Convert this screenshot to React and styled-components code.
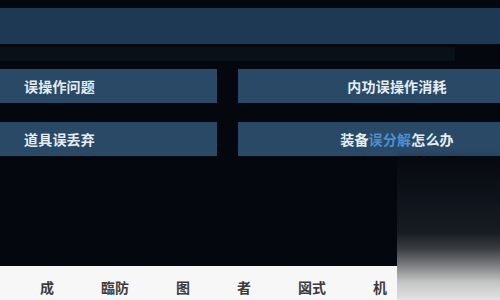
import React from "react";
import styled, { createGlobalStyle } from "styled-components";

const Global = createGlobalStyle`
  html, body { margin: 0; padding: 0; }
  body { width: 500px; height: 300px; overflow: hidden; background: #04070d; }
`;

const Page = styled.div`
  position: relative;
  width: 500px;
  height: 300px;
  overflow: hidden;
  background: #04070d;
  font-family: "Noto Sans CJK SC", "Noto Sans", sans-serif;
  display: flex;
  flex-direction: column;
`;

const TopBar = styled.div`
  margin-top: 8px;
  height: 36px;
  background: #1d3953;
`;

const Band = styled.div`
  margin-top: 3px;
  height: 14px;
  width: 455px;
  background: #0a1017;
`;

const Grid = styled.div`
  margin-top: 8px;
  display: grid;
  grid-template-columns: 217px 318px;
  column-gap: 21px;
  row-gap: 19px;
`;

const Cell = styled.div`
  height: 34px;
  background: #294966;
  display: flex;
  align-items: center;
  justify-content: ${(p) => (p.$center ? "center" : "flex-start")};
  padding-left: ${(p) => (p.$center ? "0" : "24px")};
  color: #e6edf3;
  font-size: 14px;
  font-weight: 700;
  letter-spacing: 0.2px;
  white-space: nowrap;
`;

const Blue = styled.span`
  color: #4f8fd0;
`;

const Spacer = styled.div`
  flex: 1;
`;

const Footer = styled.div`
  height: 34px;
  width: 398px;
  background: #f7f7f7;
  display: flex;
  align-items: center;
  gap: 47px;
  padding-left: 40px;
  box-sizing: border-box;
  font-size: 14px;
  font-weight: 700;
  color: #3c3c3c;
  padding-top: 8px;
`;

const Corner = styled.div`
  position: absolute;
  left: 397px;
  top: 150px;
  width: 103px;
  height: 150px;
  background: linear-gradient(
    to bottom,
    rgba(5, 8, 14, 0) 0%,
    rgba(14, 20, 27, 0.9) 30%,
    #171c22 55%,
    #3a3e42 66%,
    #7c7e80 77%,
    #c4c4c4 88%,
    #e2e2e2 100%
  );
`;

export default function App() {
  return (
    <Page>
      <Global />
      <TopBar />
      <Band />
      <Grid>
        <Cell>误操作问题</Cell>
        <Cell $center>内功误操作消耗</Cell>
        <Cell>道具误丢弃</Cell>
        <Cell $center>
          装备<Blue>误分解</Blue>怎么办
        </Cell>
      </Grid>
      <Spacer />
      <Footer>
        <span>成</span>
        <span>臨防</span>
        <span>图</span>
        <span>者</span>
        <span>図式</span>
        <span>机</span>
      </Footer>
      <Corner />
    </Page>
  );
}
